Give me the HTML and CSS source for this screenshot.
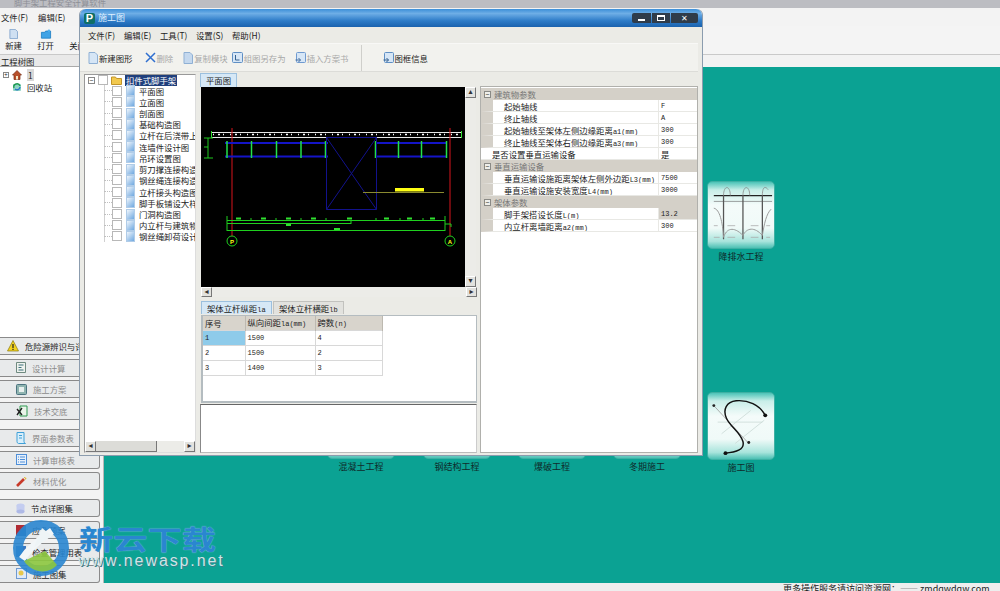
FILE: index.html
```html
<!DOCTYPE html>
<html lang="zh">
<head>
<meta charset="utf-8">
<title>施工图</title>
<link rel="stylesheet" href="styles.css">
</head>
<body>
<div class="app">
  <div class="app-title"><span>脚手架工程安全计算软件</span></div>
  <div class="app-menu"><span>文件(F)</span><span>编辑(E)</span></div>
  <div class="app-toolbar">
    <div class="app-tool">
      <svg width="9" height="10" viewBox="0 0 10 12" preserveAspectRatio="none"><path d="M1 .5h6l2.500 2.500v8.500h-8.500z" fill="#cfe0f2" stroke="#7fa3cc"/></svg>
      <span>新建</span>
    </div>
    <div class="app-tool">
      <svg width="12" height="10" viewBox="0 0 13 12"><path d="M1 4h4l1-1.500h6v8.500h-11z" fill="#3fa3e6" stroke="#1e7fc4"/><circle cx="10" cy="2" r="1.500" fill="#4fb0ee"/></svg>
      <span>打开</span>
    </div>
    <div class="app-tool"><span class="tool-gap"></span><span>关闭</span></div>
  </div>
  <div class="app-body">
    <aside class="side">
      <div class="side-head">工程树图</div>
      <div class="side-tree">
        <div class="side-row">
          <span class="plus">+</span>
          <svg width="10" height="10" viewBox="0 0 10 10"><path d="M5 .5l4.500 4.500h-1.500v4.500h-6v-4.500h-1.500z" fill="#b8502a" stroke="#7a2b12" stroke-width=".7"/><rect x="4" y="6" width="2" height="3.500" fill="#f4e8c8"/></svg>
          <span class="side-sel">1</span>
        </div>
        <div class="side-row side-row-sub">
          <svg width="10" height="10" viewBox="0 0 10 10"><rect x="1" y="2" width="8" height="7" rx="1" fill="#8fd4c4"/><path d="M2 6a3 3 0 0 1 6-2" fill="none" stroke="#1f9a52" stroke-width="1.400"/><path d="M8 5a3 3 0 0 1-5 2" fill="none" stroke="#2a78c8" stroke-width="1.400"/></svg>
          <span>回收站</span>
        </div>
      </div>
      <div class="side-buttons">
        <div class="btn-group">
          <div class="side-btn btn-strong btn-first">
            <svg width="12" height="12" viewBox="0 0 12 12"><path d="M6 .5l5.500 10.500h-11z" fill="#f2d21e" stroke="#8a7a10" stroke-width=".7"/><rect x="5.400" y="4" width="1.200" height="4" fill="#222"/><rect x="5.400" y="8.800" width="1.200" height="1.200" fill="#222"/></svg>
            <span>危险源辨识与评价</span>
          </div>
          <div class="side-btn"><svg width="10" height="11" viewBox="0 0 10 11"><path d="M.5.500h9v10h-9z" fill="#eef2ee" stroke="#6f8a80"/><path d="M2.500 3h5M2.500 5.500h3M2.500 8h5" stroke="#3b6f7a"/></svg><span>设计计算</span></div>
          <div class="side-btn"><svg width="11" height="11" viewBox="0 0 11 11"><rect x=".5" y=".5" width="10" height="10" rx="1" fill="#8fb4b0" stroke="#4c7480"/><rect x="3" y="3" width="5" height="5" fill="#e8f0ee"/></svg><span>施工方案</span></div>
          <div class="side-btn"><svg width="12" height="12" viewBox="0 0 12 12"><path d="M4 1h7v10h-7z" fill="#eaf4ea" stroke="#2f9a50"/><path d="M1 4l5 6M6 3l-5 7" stroke="#222" stroke-width="1.400"/></svg><span>技术交底</span></div>
        </div>
        <div class="btn-group">
          <div class="side-btn"><svg width="10" height="12" viewBox="0 0 10 12"><path d="M1 .5h7v9a2 2 0 0 0 1.500 2h-7a2 2 0 0 1-1.500-2z" fill="#d8eefa" stroke="#3fa0d8"/><path d="M3 3.500h3M3 6h3" stroke="#3fa0d8"/></svg><span>界面参数表</span></div>
          <div class="side-btn"><svg width="11" height="11" viewBox="0 0 11 11"><rect x=".5" y=".5" width="10" height="10" fill="#e6f0fb" stroke="#4f8fd8"/><path d="M4 3h5M4 5.500h5M4 8h5" stroke="#4f8fd8"/><path d="M2 3h1M2 5.500h1M2 8h1" stroke="#4f8fd8"/></svg><span>计算审核表</span></div>
          <div class="side-btn"><svg width="11" height="11" viewBox="0 0 11 11"><path d="M1 10l7-7" stroke="#c83a2a" stroke-width="2.600"/><path d="M8.500 1l.5 1.200 1.200.3-1 .8" fill="none" stroke="#e2b21e"/></svg><span>材料优化</span></div>
        </div>
        <div class="btn-group">
          <div class="side-btn btn-strong"><svg width="9" height="11" viewBox="0 0 9 11"><ellipse cx="4.500" cy="2.500" rx="4" ry="2" fill="#c4cdf0"/><rect x=".5" y="2.500" width="8" height="6" fill="#c4cdf0"/><ellipse cx="4.500" cy="8.500" rx="4" ry="2" fill="#aeb9e6"/></svg><span>节点详图集</span></div>
          <div class="side-btn btn-strong"><svg width="10" height="11" viewBox="0 0 10 11"><rect width="10" height="11" fill="#b02c34"/><path d="M10 0v11h-10z" fill="#2f5f9a"/></svg><span>应急预案</span></div>
          <div class="side-btn btn-strong"><svg width="10" height="11" viewBox="0 0 10 11"><rect width="10" height="11" fill="#3a78c0"/></svg><span>检查管理用表</span></div>
          <div class="side-btn btn-strong"><svg width="11" height="11" viewBox="0 0 11 11"><rect x=".5" y=".5" width="10" height="10" fill="#dfeaf8" stroke="#6f9ad0"/><circle cx="5" cy="5" r="2.500" fill="#e8c84a"/></svg><span>施工图集</span></div>
        </div>
      </div>
    </aside>
    <main class="desk">
      <div class="tile-item tile-a"><div class="tile"></div><span>混凝土工程</span></div>
      <div class="tile-item tile-b"><div class="tile"></div><span>钢结构工程</span></div>
      <div class="tile-item tile-c"><div class="tile"></div><span>爆破工程</span></div>
      <div class="tile-item tile-d"><div class="tile"></div><span>冬期施工</span></div>
      <div class="tile-item tile-water">
        <div class="tile">
          <svg width="66" height="66" viewBox="0 0 68 68">
            <path d="M6 14h60" stroke="#222" stroke-width="1.300"/>
            <path d="M6 20h60" stroke="#777" stroke-width=".7"/>
            <path d="M16 14v45M36 14v45M56 14v45" stroke="#555" stroke-width="1.300"/>
            <path d="M16 14c0-11 7-11 7 0M36 14c0-11 7-11 7 0M56 14c0-11 4-9 6-6" fill="none" stroke="#888" stroke-width=".8"/>
            <path d="M6 27c6 1 9 14 10 30c3-9 10-12 20-2c4-8 12-9 20 0c2-12 4-22 9-27" fill="none" stroke="#999" stroke-width="1"/>
            <path d="M6 45h4M20 45h8M44 45h8M60 45h4M6 57h6M20 57h8M44 57h8M60 57h4" stroke="#aaa" stroke-width=".8"/>
          </svg>
        </div>
        <span>降排水工程</span>
      </div>
      <div class="tile-item tile-draw">
        <div class="tile">
          <svg width="66" height="66" viewBox="0 0 68 68">
            <path d="M14 42l30-24M28 52l30-24M10 30h46" stroke="#c8d8d4" stroke-width=".8"/>
            <path d="M6 13l36 39" stroke="#999" stroke-width=".8"/>
            <circle cx="6" cy="13" r="1.500" fill="#222"/><circle cx="42" cy="51" r="1.500" fill="#222"/>
            <path d="M59 23c-6-11-18-16-30-15c-10 1-14 9-10 18c4 9 14 14 17 24c2 8-6 11-19 12" fill="none" stroke="#111" stroke-width="1.500"/>
            <circle cx="59" cy="23" r="2" fill="#111"/><circle cx="18" cy="62" r="2" fill="#111"/>
          </svg>
        </div>
        <span>施工图</span>
      </div>
    </main>
  </div>
  <div class="status"><span>更多操作服务请访问资源网：—— zmdqwdqw.com</span></div>
</div>

<section class="win">
  <header class="win-title">
    <span class="win-logo">P</span>
    <span class="win-name">施工图</span>
    <div class="win-btns">
      <span class="wb wb-min"><i></i></span>
      <span class="wb wb-max"><i></i></span>
      <span class="wb wb-close">✕</span>
    </div>
  </header>
  <nav class="win-menu"><span>文件(F)</span><span>编辑(E)</span><span>工具(T)</span><span>设置(S)</span><span>帮助(H)</span></nav>
  <div class="win-tools">
    <div class="wt wt-new"><svg width="10" height="12" viewBox="0 0 10 12"><path d="M1 .5h6l2.500 2.500v8.500h-8.500z" fill="#d6e6f6" stroke="#8fb0d4"/></svg><span>新建图形</span></div>
    <div class="wt wt-del off"><svg width="11" height="11" viewBox="0 0 11 11"><path d="M1 1l9 9M10 1l-9 9" stroke="#2f6fd0" stroke-width="1.500"/></svg><span>删除</span></div>
    <div class="wt wt-copy off"><svg width="10" height="12" viewBox="0 0 10 12"><path d="M1 .5h6l2.500 2.500v8.500h-8.500z" fill="#c4d8ee" stroke="#8fb0d4"/></svg><span>复制模块</span></div>
    <div class="wt wt-save off"><svg width="11" height="11" viewBox="0 0 11 11"><rect x=".5" y=".5" width="10" height="10" rx="1" fill="#d6e6f6" stroke="#5f8fc4"/><path d="M3.500 3v5h4" fill="none" stroke="#35618f"/></svg><span>组图另存为</span></div>
    <div class="wt wt-ins off"><svg width="11" height="12" viewBox="0 0 11 12"><rect x="1.500" y=".5" width="9" height="10" rx="1" fill="#d6e6f6" stroke="#6f9ad0"/><path d="M.5 8h5M3.500 6l2 2-2 2" fill="none" stroke="#476f9f"/></svg><span>插入方案书</span></div>
    <i class="wt-sep"></i>
    <div class="wt wt-info"><svg width="11" height="12" viewBox="0 0 11 12"><rect x="1.500" y=".5" width="9" height="10" rx="1" fill="#d6e6f6" stroke="#5f8fc4"/><path d="M.5 8h5M3.500 6l2 2-2 2" fill="none" stroke="#35618f"/></svg><span>图框信息</span></div>
  </div>
  <div class="win-body">
    <div class="tree-panel">
      <div class="tree-list">
        <div class="t-root">
          <span class="minus">−</span><span class="chk"></span>
          <svg width="11" height="10" viewBox="0 0 11 10"><path d="M.5 2h4l1 1.500h5v6h-10z" fill="#f2c94e" stroke="#c2952a"/></svg>
          <span class="t-sel">扣件式脚手架</span>
        </div>
        <div class="t-row"><span class="chk"></span><i class="doc"></i><span>平面图</span></div>
        <div class="t-row"><span class="chk"></span><i class="doc"></i><span>立面图</span></div>
        <div class="t-row"><span class="chk"></span><i class="doc"></i><span>剖面图</span></div>
        <div class="t-row"><span class="chk"></span><i class="doc"></i><span>基础构造图</span></div>
        <div class="t-row"><span class="chk"></span><i class="doc"></i><span>立杆在后浇带上构造</span></div>
        <div class="t-row"><span class="chk"></span><i class="doc"></i><span>连墙件设计图</span></div>
        <div class="t-row"><span class="chk"></span><i class="doc"></i><span>吊环设置图</span></div>
        <div class="t-row"><span class="chk"></span><i class="doc"></i><span>剪刀撑连接构造图</span></div>
        <div class="t-row"><span class="chk"></span><i class="doc"></i><span>钢丝绳连接构造图</span></div>
        <div class="t-row"><span class="chk"></span><i class="doc"></i><span>立杆接头构造图</span></div>
        <div class="t-row"><span class="chk"></span><i class="doc"></i><span>脚手板铺设大样图</span></div>
        <div class="t-row"><span class="chk"></span><i class="doc"></i><span>门洞构造图</span></div>
        <div class="t-row"><span class="chk"></span><i class="doc"></i><span>内立杆与建筑物距离</span></div>
        <div class="t-row"><span class="chk"></span><i class="doc"></i><span>钢丝绳卸荷设计图</span></div>
      </div>
      <div class="hscroll tree-scroll"><b class="arr">◂</b><i class="thumb"></i><b class="arr">▸</b></div>
    </div>
    <div class="mid">
      <div class="tab-strip"><span class="tab tab-on">平面图</span></div>
      <div class="cad-wrap">
        <svg class="cad" width="264" height="200" viewBox="0 0 264 200">
          <rect width="264" height="200" fill="#000"/>
          <rect x="10.500" y="45.500" width="250" height="5" fill="none" stroke="#e8e8e8"/>
          <path d="M12 47.500h246" stroke="#fff" stroke-width="1.500" stroke-dasharray="1 4 2 3 1 6"/>
          <path d="M10.500 44v7M260.500 44v7" stroke="#2fe02f"/>
          <path d="M31 41v108M249 41v108" stroke="#d8141c"/>
          <path d="M24 56h103M174 56h72M24 69.500h103M174 69.500h72" stroke="#1414c8" stroke-width="2"/>
          <path d="M26 54v17M50.500 54v17M75.500 54v17M100 54v17M124.500 54v17M174.500 54v17M197.500 54v17M220.500 54v17M245.500 54v17" stroke="#22e04a" stroke-width="1.500"/>
          <path d="M125.500 50.500h50v72h-50zM125.500 50.500l50 72M175.500 50.500l-50 72" fill="none" stroke="#12128c"/>
          <rect x="194" y="101" width="29" height="3.500" fill="#ffff14"/>
          <path d="M162 105.500h81" stroke="#8a8a30"/>
          <path d="M3 51h4v20h-4M7 51h5M7 60h-4M7 71h5" fill="none" stroke="#1fc81f"/>
          <path d="M26 133.500h218M26 136.500h124M26 143.500h218M26 129v15M244 129v15M150 133v4" fill="none" stroke="#1fd01f"/>
          <path d="M50 131v3M75 131v3M100 131v3M125 131v3M175 131v3M199 131v3M222 131v3" stroke="#1fd01f"/>
          <path d="M35 131.500h5M60 131.500h5M85 131.500h5M110 131.500h5M146 131.500h5M183 131.500h5M206 131.500h5M229 131.500h5M85 138h5M133 142h6" stroke="#2fe02f" stroke-width="2"/>
          <path d="M244 137h6v3" fill="none" stroke="#1fd01f"/>
          <circle cx="31" cy="154" r="5" fill="none" stroke="#1fd01f"/>
          <circle cx="249" cy="154" r="5" fill="none" stroke="#1fd01f"/>
          <text class="axis" x="31" y="157" text-anchor="middle">P</text>
          <text class="axis" x="249" y="157" text-anchor="middle">A</text>
        </svg>
        <div class="vscroll"><b class="arr">▴</b><b class="arr">▾</b></div>
      </div>
      <div class="hscroll cad-scroll"><b class="arr">◂</b><b class="arr">▸</b></div>
      <div class="tab-strip tab-strip-low"><span class="tab tab-on">架体立杆纵距<span class="lat">la</span></span><span class="tab">架体立杆横距<span class="lat">lb</span></span></div>
      <div class="table-box">
        <table class="grid">
          <thead><tr><th class="c1">序号</th><th class="c2">纵向间距<span class="lat">la(mm)</span></th><th class="c3">跨数<span class="lat">(n)</span></th></tr></thead>
          <tbody>
            <tr><td class="cell-on">1</td><td>1500</td><td>4</td></tr>
            <tr><td>2</td><td>1500</td><td>2</td></tr>
            <tr><td>3</td><td>1400</td><td>3</td></tr>
          </tbody>
        </table>
      </div>
      <div class="note-box"></div>
    </div>
    <div class="props">
      <div class="p-sec"><span class="pm">−</span><span>建筑物参数</span></div>
      <div class="p-row"><span class="p-k">起始轴线</span><span class="p-v">F</span></div>
      <div class="p-row"><span class="p-k">终止轴线</span><span class="p-v">A</span></div>
      <div class="p-row"><span class="p-k">起始轴线至架体左侧边缘距离<span class="lat">a1(mm)</span></span><span class="p-v">300</span></div>
      <div class="p-row"><span class="p-k">终止轴线至架体右侧边缘距离<span class="lat">a3(mm)</span></span><span class="p-v">300</span></div>
      <div class="p-row p-flat"><span class="p-k">是否设置垂直运输设备</span><span class="p-v p-cjk">是</span></div>
      <div class="p-sec"><span class="pm">−</span><span>垂直运输设备</span></div>
      <div class="p-row"><span class="p-k">垂直运输设施距离架体左侧外边距<span class="lat">L3(mm)</span></span><span class="p-v">7500</span></div>
      <div class="p-row"><span class="p-k">垂直运输设施安装宽度<span class="lat">L4(mm)</span></span><span class="p-v">3000</span></div>
      <div class="p-sec"><span class="pm">−</span><span>架体参数</span></div>
      <div class="p-row"><span class="p-k">脚手架搭设长度<span class="lat">L(m)</span></span><span class="p-v p-shade">13.2</span></div>
      <div class="p-row"><span class="p-k">内立杆离墙距离<span class="lat">a2(mm)</span></span><span class="p-v">300</span></div>
    </div>
  </div>
</section>

<div class="mark">
  <svg class="mark-logo" width="58" height="58" viewBox="0 0 58 58">
    <circle cx="29" cy="29" r="23" fill="none" stroke="#2a86d0" stroke-width="10" opacity=".9"/>
    <path d="M10 40c8-12 18-20 30-28" fill="none" stroke="#f2f6f8" stroke-width="7"/>
    <path d="M12 42c8 12 24 14 33 4l-12-14z" fill="#8cc63e" opacity=".9"/>
    <path d="M22 28l8-19 10 8z" fill="#eef4f6"/>
  </svg>
  <div class="mark-text">
    <div class="mark-cn">新云下载</div>
    <div class="mark-en">www.newasp.net</div>
  </div>
</div>
</body>
</html>
```

FILE: styles.css
```css
* { box-sizing: border-box; }
html, body { margin: 0; height: 591px; overflow: hidden; }
body {
  position: relative;
  font: 8.400px/12px "Noto Sans CJK SC", "Liberation Sans", sans-serif;
  color: #222;
  background: #f2f2f2;
}
svg { display: block; flex: none; }
.lat { font: 7px/12px "Liberation Mono", monospace; }

.app { display: flex; flex-direction: column; height: 591px; }
.app-title { height: 8px; background: #bcbdc2; color: #8d8f96; overflow: hidden; padding-left: 14px; line-height: 4px; }
.app-menu { height: 18px; display: flex; gap: 10px; align-items: center; background: #f3f3f3; padding-left: 1px; }
.app-toolbar { height: 29px; display: flex; gap: 13px; padding-left: 4px; background: #f4f4f4; border-bottom: 1px solid #c9c9c9; }
.app-tool { width: 19px; display: flex; flex-direction: column; align-items: center; gap: 1px; padding-top: 3px; white-space: nowrap; line-height: 11px; }
.tool-gap { height: 10px; }
.app-body { flex: 1; display: flex; min-height: 0; }

.side { width: 104px; display: flex; flex-direction: column; background: #fff; border-right: 1px solid #b8b8b8; }
.side-head { height: 12px; background: #e9e9e9; padding-left: 1px; line-height: 12px; border-bottom: 1px solid #aaa; }
.side-tree { padding: 2px 0 0 3px; height: 270px; }
.side-row { height: 12px; display: flex; align-items: center; gap: 3px; }
.side-row-sub { padding-left: 9px; gap: 5px; }
.plus { width: 6px; height: 6px; border: 1px solid #888; font-size: 6px; line-height: 4px; text-align: center; }
.side-sel { padding: 0 1px; background: #d8d8d8; margin-left: 2px; }
.side-buttons { display: flex; flex-direction: column; gap: 9px; flex: 1; background: #f3f3f3; padding-right: 3px; }
.btn-group { display: flex; flex-direction: column; gap: 3.700px; }
.side-btn {
  height: 18px; display: flex; align-items: center; gap: 6px; padding-left: 16px;
  background: #e8eaeb; border: 1px solid #8a8a8a; border-left: 0; border-radius: 0 3px 3px 0;
  color: #8c8c8c; white-space: nowrap; overflow: hidden;
}
.btn-strong { color: #222; }
.btn-first { padding-left: 7px; gap: 6px; }

.desk { flex: 1; position: relative; background: #0ba293; border-top: 12px solid #f2f2f2; }
.tile-item { position: absolute; width: 68px; display: flex; flex-direction: column; align-items: center; color: #0f2b2b; font-size: 9px; }
.tile-item span { white-space: nowrap; margin-top: 2px; }
.tile {
  width: 68px; height: 68px; border-radius: 5px;
  background: linear-gradient(180deg, #4cc4b8 0, #c8eee8 12%, #f4fbfa 35%, #f0faf8 70%, #a8e4dc 90%, #4cc0b4 100%);
  border: 1px solid #3eb0a4;
}
.tile-a { left: 223px; top: 324px; }
.tile-b { left: 319px; top: 324px; }
.tile-c { left: 414px; top: 324px; }
.tile-d { left: 509px; top: 324px; }
.tile-water { left: 603px; top: 114px; }
.tile-draw { left: 603px; top: 325px; }

.status { height: 8px; background: #eeeeee; overflow: hidden; padding-left: 783px; line-height: 12px; font-size: 9px; color: #222; white-space: nowrap; }

/* child window on the desktop */
.win {
  position: absolute; left: 79px; top: 9px; width: 624px; height: 447px;
  display: flex; flex-direction: column;
  background: #ebebe6; border: 1px solid #8b9cae; border-top: 0; border-radius: 6px 6px 0 0;
}
.win-title {
  height: 18px; display: flex; align-items: center; padding: 0 4px 0 4px;
  background: linear-gradient(180deg, #3c8fd8 0, #6eaee6 25%, #2e7cc8 65%, #1a62ae 100%);
  border-radius: 6px 6px 0 0; color: #dff0ff;
}
.win-logo { width: 11px; height: 11px; background: #0f6f66; color: #fff; font: bold 11px/11px "Liberation Sans", sans-serif; text-align: center; border-radius: 2px; margin-right: 3px; }
.win-name { font-size: 9px; }
.win-btns { margin-left: auto; display: flex; height: 10px; gap: 1px; }
.wb { height: 10px; background: #2f3c4a; display: flex; align-items: center; justify-content: center; color: #fff; }
.wb-min { width: 19px; border-radius: 2px 0 0 2px; }
.wb-min i { width: 7px; height: 2px; background: #fff; margin-top: 3px; }
.wb-max { width: 18px; }
.wb-max i { width: 8px; height: 6px; border: 1px solid #fff; border-top-width: 2px; }
.wb-close { width: 27px; font-size: 8px; line-height: 10px; border-radius: 0 2px 2px 0; }

.win-menu { height: 16px; display: flex; align-items: center; padding-left: 8px; }
.win-menu span { width: 36px; white-space: nowrap; }
.win-tools { height: 29px; display: flex; align-items: center; background: #f2f2ee; border-top: 1px solid #f8f8f6; border-bottom: 1px solid #dcdcd8; margin-right: 4px; }
.wt { display: flex; align-items: center; gap: 1px; white-space: nowrap; }
.off { color: #a8a8a8; }
.wt-new { margin-left: 8px; }
.wt-del { margin-left: 12px; }
.wt-copy { margin-left: 10px; }
.wt-save { margin-left: 4px; }
.wt-ins { margin-left: 9px; }
.wt-sep { width: 1px; height: 26px; background: #cfcfcb; margin-left: 12px; }
.wt-info { margin-left: 21px; }

.win-body { flex: 1; display: flex; min-height: 0; padding: 1px 4px 2px 4px; }
.tree-panel { width: 112px; margin-top: 1px; display: flex; flex-direction: column; background: #fff; border: 1px solid #999; border-right-color: #ddd; border-bottom-color: #ddd; overflow: hidden; }
.tree-list { flex: 1; padding: 0 0 0 3px; overflow: hidden; }
.t-root { height: 10px; display: flex; align-items: center; gap: 3px; }
.minus { width: 7px; height: 7px; border: 1px solid #888; font-size: 7px; line-height: 5px; text-align: center; }
.chk { width: 10px; height: 10px; background: #fff; border: 1px solid #b8b8b8; flex: none; }
.t-sel { background: #1f3f7c; color: #fff; padding: 0 1px; }
.t-row {
  height: 11.230px; display: flex; align-items: center; white-space: nowrap; padding-left: 16px;
  background: linear-gradient(#d0d0d0, #d0d0d0) 16px 0 / 1px 100% no-repeat;
}
.t-row::before { content: ""; width: 8px; border-top: 1px dotted #c0c0c0; flex: none; }
.doc { width: 9px; height: 11px; margin: 0 4px; flex: none; background: linear-gradient(135deg, #f0f6fc, #6fa8e0); border: 1px solid #b0cce8; }

.hscroll { height: 11px; display: flex; justify-content: space-between; align-items: stretch; background: #ecece8; flex: none; }
.arr { width: 11px; background: #e2e2de; border: 1px solid #fff; border-right-color: #777; border-bottom-color: #777; color: #333; font: 8px/8px "DejaVu Sans", sans-serif; text-align: center; }
.thumb { flex: 1; background: #dcdcd8; border-right: 1px solid #777; border-bottom: 1px solid #777; margin-right: 27px; }

.mid { width: 277px; margin-left: 4px; display: flex; flex-direction: column; }
.tab-strip { height: 14px; display: flex; gap: 1px; flex: none; }
.tab { padding: 0 5px; background: #e2e2de; border: 1px solid #c2c2be; border-bottom: 0; line-height: 12px; white-space: nowrap; }
.tab-on { background: #d6e8f6; border-color: #9cc0de; }
.cad-wrap { display: flex; height: 200px; flex: none; margin-left: 1px; }
.cad { background: #000; }
.axis { font: bold 6px "Liberation Sans", sans-serif; fill: #ffff14; }
.vscroll { width: 11px; display: flex; flex-direction: column; justify-content: space-between; background: #ecece8; }
.vscroll .arr { width: 11px; height: 11px; }
.cad-scroll { margin-left: 1px; justify-content: space-between; height: 10px; }
.tab-strip-low { margin-top: 4px; height: 13px; padding-left: 1px; }
.tab-strip-low .tab { width: 71px; }
.table-box { height: 88px; margin: 1px 0 0 1px; background: #fff; border: 1px solid #b4bcc0; border-left-width: 2px; border-bottom-width: 2px; flex: none; }
.grid { border-collapse: collapse; table-layout: fixed; width: 179px; font: 7px/12px "Liberation Mono", "Noto Sans CJK SC", monospace; }
.grid th { height: 14px; background: #d8d4cc; border-right: 1px solid #bdb9b0; font: 400 8.400px/12px "Noto Sans CJK SC", sans-serif; text-align: left; padding: 0 2px; overflow: hidden; white-space: nowrap; }
.grid td { height: 15px; border: 1px solid #d8d8d8; border-left: 0; padding: 0 2px; }
.c1 { width: 42px; } .c2 { width: 70px; } .c3 { width: 67px; }
.cell-on { background: #8ecbea; }
.note-box { flex: 1; margin: 1px 0 0 0; background: #fff; border: 1px solid #888; border-top: 1px solid #666; border-right-color: #ccc; border-bottom-color: #bbb; }

.props { flex: 1; margin: 13px 0 0 3px; background: #fff; border: 1px solid #b0b0ac; padding: 1px 0 0 0; }
.p-sec { height: 12px; background: #d4d0c8; color: #777; display: flex; align-items: center; gap: 3px; padding-left: 3px; }
.pm { width: 7px; height: 7px; background: #efefea; border: 1px solid #8a8a86; font-size: 7px; line-height: 5px; text-align: center; color: #222; }
.p-row { height: 12px; display: flex; border-bottom: 1px solid #e8e8e4; border-left: 12px solid #d4d0c8; }
.p-k { width: 166px; padding-left: 11px; white-space: nowrap; overflow: hidden; border-right: 1px solid #e8e8e4; }
.p-v { padding-left: 2px; flex: 1; font: 7px/12px "Liberation Mono", monospace; }
.p-cjk { font: 8.400px/12px "Noto Sans CJK SC", sans-serif; }
.p-flat { border-left: 0; }
.p-flat .p-k { width: 178px; }
.p-shade { background: #d4d0c8; }

/* watermark over the screenshot */
.mark { position: absolute; left: 12px; top: 519px; display: flex; align-items: flex-start; pointer-events: none; }
.mark-text { margin: 6px 0 0 9px; }
.mark-cn { font: bold 27px/28px "Noto Sans CJK SC", sans-serif; color: #2a86d0; white-space: nowrap; text-shadow: 0 0 1px #9fd0ec; transform: scaleX(1.270); transform-origin: left; }
.mark-en { font: 16px/14px "Liberation Sans", sans-serif; letter-spacing: 1.900px; color: #cfe4e6; margin: 1px 0 0 -1px; white-space: nowrap; text-shadow: 1px 1px 0 #3a7f8a; }
```
